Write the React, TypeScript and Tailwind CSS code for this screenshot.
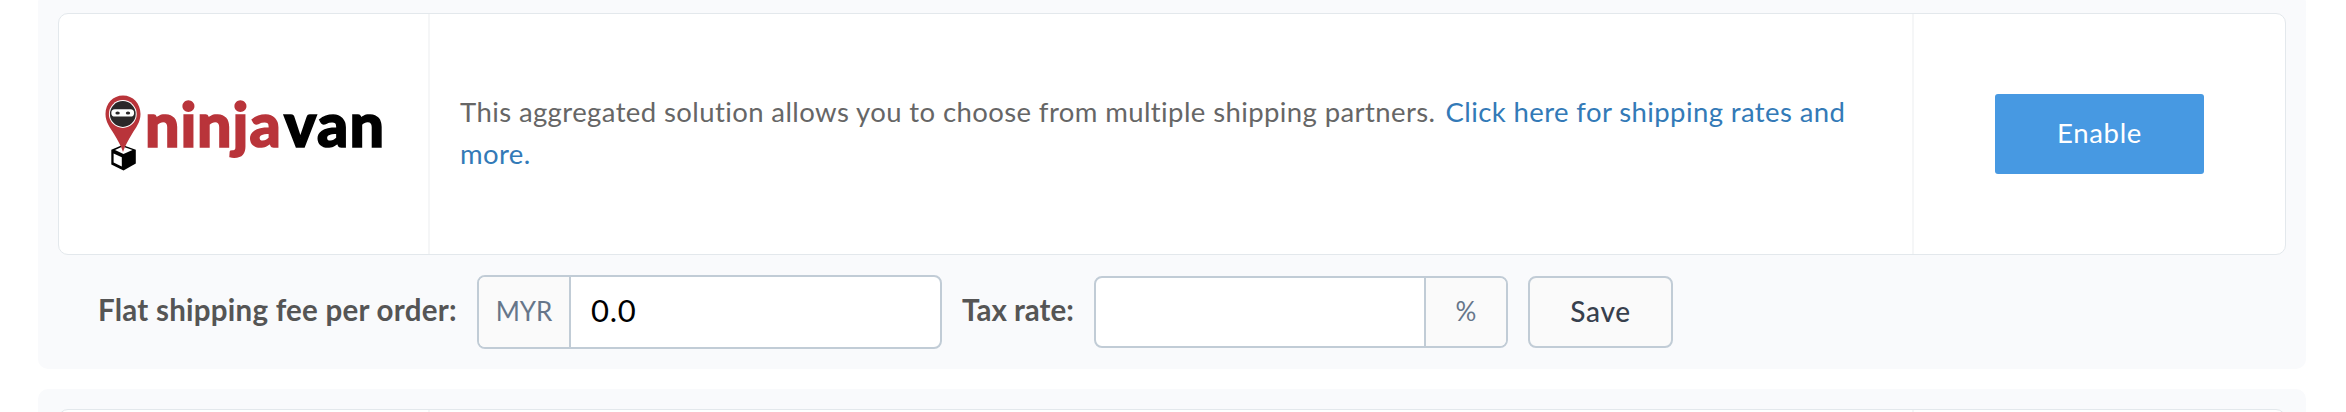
import type { ReactNode } from 'react';

function NinjaVanLogo() {
  return (
    <svg
      width="288"
      height="84"
      viewBox="100 92 288 84"
      className="overflow-visible"
      role="img"
      aria-label="ninjavan"
    >
      <path d="M111.3 149.8 L122.5 145 L135.8 149.8 L135.8 163.5 L123.5 170.5 L111.3 164.5 Z" fill="#000" />
      <path d="M115 150 L122.5 146.6 L132.5 150 L123.5 154 Z" fill="#fff" />
      <path d="M113.6 153.6 L121.8 157.2 L121.8 166.6 L113.6 162.6 Z" fill="#fff" />
      <path
        d="M123 95.5 C113 95.5 105.5 103.5 105.5 114 C105.5 122 110 127.5 114 134 C118 140.5 121 146 123 152 C125 146 128 140.5 132 134 C136 127.5 140.5 122 140.5 114 C140.5 103.5 133 95.5 123 95.5 Z"
        fill="#b9343a"
      />
      <circle cx="122.8" cy="114" r="13.9" fill="#fff" />
      <circle cx="122.8" cy="114" r="12.9" fill="#2b2829" />
      <rect x="111.3" y="109.3" width="22.8" height="7.2" rx="3.6" fill="#fff" />
      <ellipse cx="117.6" cy="113" rx="2.2" ry="1.6" fill="#2b2829" />
      <ellipse cx="128" cy="113" rx="2.2" ry="1.6" fill="#2b2829" />
      <g fontFamily="Lato, sans-serif" fontWeight="900" fontSize="61" strokeWidth="1.6">
        <text y="147.4" x="145 180.5 197 232.5 249.5" fill="#b9343a" stroke="#b9343a">
          ninja
        </text>
        <text y="147.4" x="284 317 349.5" fill="#000" stroke="#000">
          van
        </text>
      </g>
    </svg>
  );
}

function Panel({ children }: { children: ReactNode }) {
  return <section className="rounded-[10px] bg-[#f9fafc] p-5">{children}</section>;
}

function CourierCard() {
  return (
    <div className="flex h-[242px] rounded-[10px] border border-[#e3e8ec] bg-white">
      <div className="flex w-[371px] shrink-0 items-center border-r-2 border-[#f5f6f7] pl-[41px]">
        <NinjaVanLogo />
      </div>
      <p className="flex-1 pl-[30px] pt-[77px] text-[27.5px] leading-[42px] tracking-[0.4px] text-[#666]">
        This aggregated solution allows you to choose from multiple shipping partners.
        <a href="#" className="ml-[10px] text-[#337ab7]">
          Click here for shipping rates and
          <br />
          more.
        </a>
      </p>
      <div className="flex w-[373px] shrink-0 items-center justify-center border-l-2 border-[#f5f6f7]">
        <button className="h-20 w-[209px] rounded-[3px] bg-[#4799e2] pb-[2px] text-[27.5px] tracking-[0.7px] text-white">
          Enable
        </button>
      </div>
    </div>
  );
}

function ShippingForm() {
  return (
    <form className="flex h-[74px] items-center pl-[40px]">
      <label
        htmlFor="fee"
        className="w-[379px] whitespace-nowrap pb-[3px] text-[29.5px] font-bold tracking-[0.25px] text-[#555]"
      >
        Flat shipping fee per order:
      </label>
      <div className="flex h-[74px] w-[465px] overflow-hidden rounded-[8px] border-2 border-[#c1ccd6] bg-white">
        <span className="flex w-[92px] shrink-0 items-center justify-center border-r-2 border-[#c1ccd6] bg-[#fafafa] pb-[2px] text-[26px] text-[#66768a]">
          MYR
        </span>
        <input
          id="fee"
          defaultValue="0.0"
          className="min-w-0 flex-1 px-5 pb-[4px] text-[31px] tracking-[0.7px] text-black outline-none"
        />
      </div>
      <label
        htmlFor="tax"
        className="ml-5 w-[132px] whitespace-nowrap pb-[3px] text-[29.5px] font-bold text-[#555]"
      >
        Tax rate:
      </label>
      <div className="flex h-[72px] w-[414px] overflow-hidden rounded-[8px] border-2 border-[#c1ccd6] bg-white">
        <input id="tax" className="min-w-0 flex-1 px-5 text-[31px] text-black outline-none" />
        <span className="flex w-[82px] shrink-0 items-center justify-center border-l-2 border-[#c1ccd6] bg-[#fafafa] pb-[2px] text-[26px] text-[#66768a]">
          %
        </span>
      </div>
      <button
        type="button"
        className="ml-5 h-[72px] w-[145px] rounded-[8px] border-2 border-[#c1ccd6] bg-[#fafafa] pb-[2px] text-[28px] font-medium tracking-[0.7px] text-[#37404d]"
      >
        Save
      </button>
    </form>
  );
}

export default function App() {
  return (
    <main className="h-[412px] overflow-hidden bg-white pl-[38px] pr-10 font-['Lato',sans-serif]">
      <div className="-mt-[7px] flex flex-col gap-5">
        <Panel>
          <CourierCard />
          <div className="pt-5">
            <ShippingForm />
          </div>
        </Panel>
        {/* the next courier only peeks in at the bottom edge */}
        <Panel>
          <div className="flex h-[242px] rounded-[10px] border border-[#e3e8ec] bg-white">
            <div className="w-[371px] border-r-2 border-[#f5f6f7]" />
            <div className="flex-1" />
            <div className="w-[373px] border-l-2 border-[#f5f6f7]" />
          </div>
        </Panel>
      </div>
    </main>
  );
}
